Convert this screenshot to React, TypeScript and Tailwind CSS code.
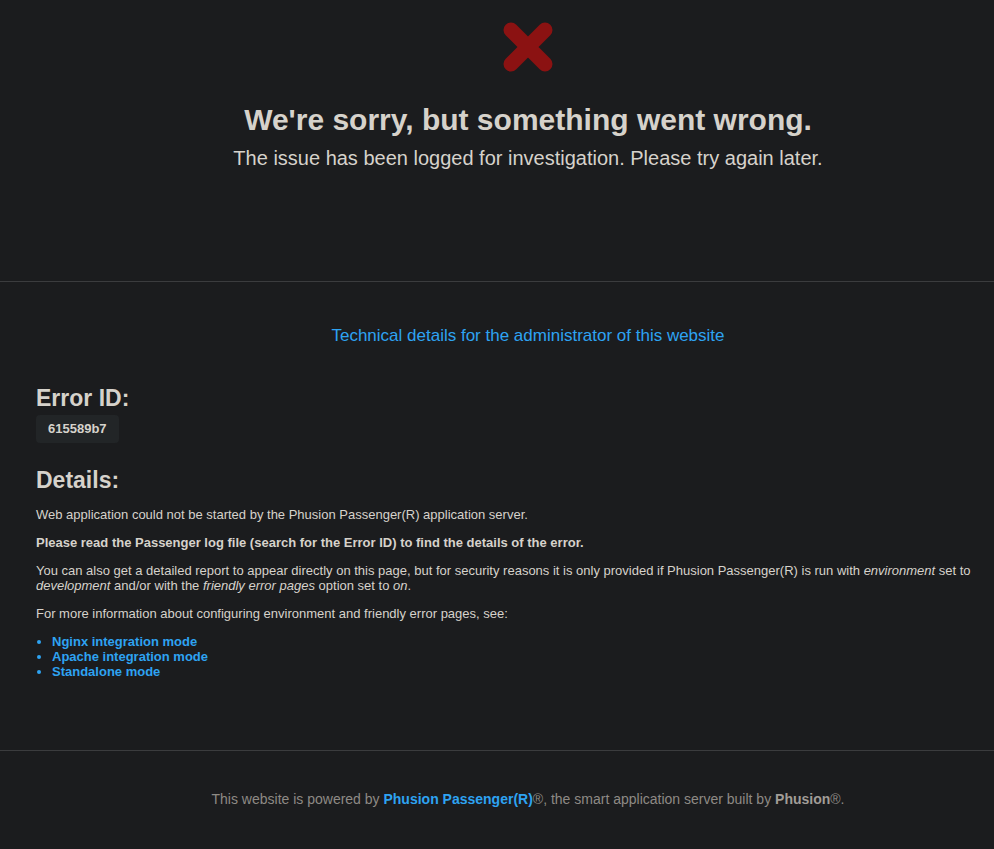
export default function App() {
  return (
    <div className="min-h-[849px] overflow-hidden bg-[#1b1c1e] text-[#d6d2cb] font-['Liberation_Sans',Arial,sans-serif]">
      <div className="w-[1056px]">
        {/* top message */}
        <div className="flex flex-col items-center pt-[21px] pb-[111px]">
          <svg width="52" height="52" viewBox="0 0 52 52">
            <path d="M9 9 L43 43 M43 9 L9 43" stroke="#8b1212" strokeWidth="15" strokeLinecap="round" />
          </svg>
          <h1 className="mt-[29px] text-[30px] font-bold leading-[36px]">We're sorry, but something went wrong.</h1>
          <p className="mt-[8px] text-[20px] leading-[24px]">The issue has been logged for investigation. Please try again later.</p>
        </div>

        <div className="border-t border-[#3b3c3e]" />

        <div className="px-[36px] pt-[41px] pb-[71px]">
          <div className="text-center">
            <a className="text-[17px] text-[#2ea3f2]">Technical details for the administrator of this website</a>
          </div>

          <h2 className="mt-[36px] text-[23px] font-bold leading-[26px]">Error ID:</h2>
          <div className="mt-[4px] inline-block rounded-[4px] bg-[#222527] px-[12px] py-[6px] text-[13px] font-bold leading-[16px]">615589b7</div>

          <h2 className="mt-[24px] text-[23px] font-bold leading-[26px]">Details:</h2>
          <div className="mt-[14px] flex flex-col gap-[13px] text-[13px] leading-[15px]">
            <p>Web application could not be started by the Phusion Passenger(R) application server.</p>
            <p className="font-bold">Please read the Passenger log file (search for the Error ID) to find the details of the error.</p>
            <p>
              You can also get a detailed report to appear directly on this page, but for security reasons it is only provided if Phusion Passenger(R) is run with <em>environment</em> set to <em>development</em> and/or with the <em>friendly error pages</em> option set to <em>on</em>.
            </p>
            <p>For more information about configuring environment and friendly error pages, see:</p>
            <ul className="ml-[16px] list-disc text-[13px] font-bold leading-[15px] text-[#2ea3f2]">
              <li><a>Nginx integration mode</a></li>
              <li><a>Apache integration mode</a></li>
              <li><a>Standalone mode</a></li>
            </ul>
          </div>
        </div>

        <div className="border-t border-[#3b3c3e]" />

        <div className="pt-[38px] text-center text-[14px] text-[#8e8a85]">
          This website is powered by <a className="font-bold text-[#2ea3f2]">Phusion Passenger(R)</a>®, the smart application server built by <b className="text-[#a19d97]">Phusion</b>®.
        </div>
      </div>
    </div>
  );
}
